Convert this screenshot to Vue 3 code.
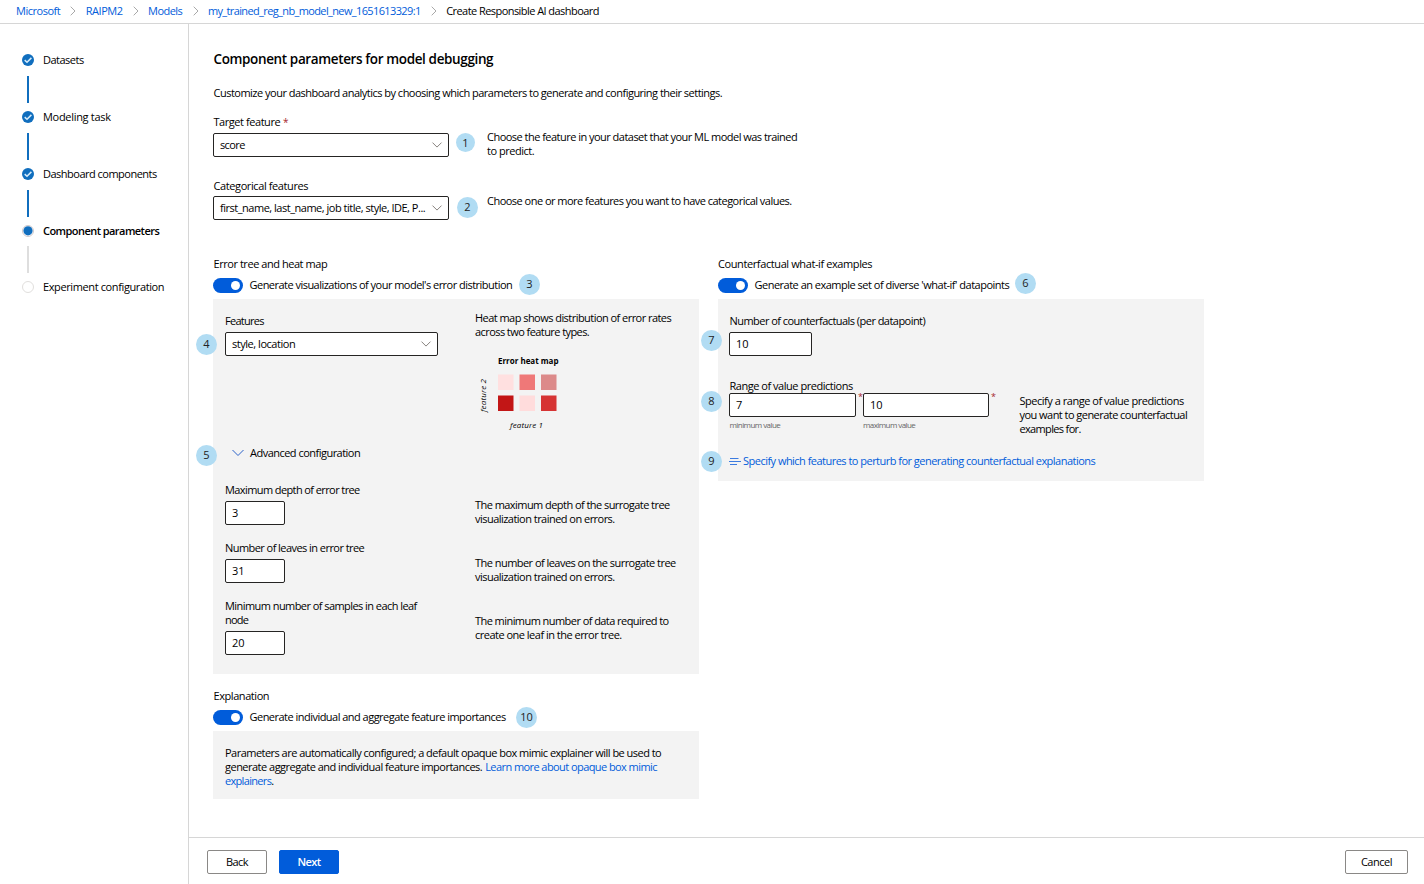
<script setup>
const crumbs = [
  { text: 'Microsoft', w: 45 },
  { text: 'RAIPM2', w: 37.5 },
  { text: 'Models', w: 35 },
  { text: 'my_trained_reg_nb_model_new_1651613329:1', w: 213.5 },
]

const steps = [
  { text: 'Datasets', w: 41.5, state: 'done' },
  { text: 'Modeling task', w: 68.5, state: 'done' },
  { text: 'Dashboard components', w: 114.5, state: 'done' },
  { text: 'Component parameters', w: 117, state: 'current' },
  { text: 'Experiment configuration', w: 122, state: 'todo' },
]

const treeSettings = [
  {
    label: [['Maximum depth of error tree', 135.5]],
    value: '3',
    help: [['The maximum depth of the surrogate tree', 195.5], ['visualization trained on errors.', 140.5]],
  },
  {
    label: [['Number of leaves in error tree', 140]],
    value: '31',
    help: [['The number of leaves on the surrogate tree', 201.5], ['visualization trained on errors.', 140.5]],
  },
  {
    label: [['Minimum number of samples in each leaf', 192.5], ['node', 24]],
    value: '20',
    help: [['The minimum number of data required to', 194.5], ['create one leaf in the error tree.', 147.5]],
  },
]

// Tracks a line of text so that it fills the given width in pixels.
const vFit = {
  mounted(el, { value }) {
    const natural = el.getBoundingClientRect().width
    const count = el.textContent.length
    if (count) el.style.letterSpacing = `${(value - 0.8 - natural) / count}px`
  },
}
</script>

<template>
  <div class="page">
    <nav class="crumbs">
      <template v-for="c in crumbs" :key="c.text">
        <a v-fit="c.w" class="line link">{{ c.text }}</a>
        <svg class="sep" width="6" height="10" viewBox="0 0 6 10"><path d="M.7.7 5 5 .7 9.3" /></svg>
      </template>
      <span v-fit="153.5" class="line">Create Responsible AI dashboard</span>
    </nav>

    <div class="body">
      <aside class="steps">
        <div v-for="s in steps" :key="s.text" class="step" :class="s.state">
          <div class="step-row">
            <svg class="dot" width="12" height="12" viewBox="0 0 12 12">
              <template v-if="s.state === 'done'">
                <circle cx="6" cy="6" r="6" fill="#106ebe" />
                <path d="M2.700 6.100 5 8.300 9.400 3.900" fill="none" stroke="#d5ebfa" stroke-width="1.500" />
              </template>
              <template v-else-if="s.state === 'current'">
                <circle cx="6" cy="6" r="5.5" fill="#fff" stroke="#cfc9cc" />
                <circle cx="6" cy="5.8" r="4.6" fill="#106ebe" />
              </template>
              <circle v-else cx="6" cy="6" r="5.5" fill="#fff" stroke="#e1dfdd" />
            </svg>
            <span v-fit="s.w" class="line">{{ s.text }}</span>
          </div>
          <div class="connector"></div>
        </div>
      </aside>

      <div class="right">
        <main class="main">
          <h1><span v-fit="280.5" class="line">Component parameters for model debugging</span></h1>
          <p class="intro"><span v-fit="509.5" class="line">Customize your dashboard analytics by choosing which parameters to generate and configuring their settings.</span></p>

          <div class="field-row first">
            <div class="field">
              <div class="label inset"><span v-fit="67.5" class="line">Target feature</span> <i class="req">*</i></div>
              <div class="box wide">
                <span v-fit="25.5" class="line">score</span>
                <svg class="caret" width="10" height="6" viewBox="0 0 10 6"><path d="M.5.6 5 5.1 9.5.6" /></svg>
              </div>
            </div>
            <b class="badge small b1">1</b>
            <div class="help">
              <span v-fit="311" class="line">Choose the feature in your dataset that your ML model was trained</span>
              <span v-fit="48" class="line">to predict.</span>
            </div>
          </div>

          <div class="field-row second">
            <div class="field">
              <div class="label inset"><span v-fit="95.5" class="line">Categorical features</span></div>
              <div class="box wide">
                <span v-fit="206" class="line">first_name, last_name, job title, style, IDE, P...</span>
                <svg class="caret" width="10" height="6" viewBox="0 0 10 6"><path d="M.5.6 5 5.1 9.5.6" /></svg>
              </div>
            </div>
            <b class="badge b2">2</b>
            <div class="help">
              <span v-fit="305.5" class="line">Choose one or more features you want to have categorical values.</span>
            </div>
          </div>

          <div class="columns">
            <div class="column">
              <div class="heading inset"><span v-fit="114.5" class="line">Error tree and heat map</span></div>
              <div class="switch-row">
                <span class="toggle"></span>
                <span v-fit="263.5" class="line">Generate visualizations of your model's error distribution</span>
                <b class="badge b3">3</b>
              </div>
              <section class="panel tree">
                <b class="badge edge b4">4</b>
                <b class="badge edge b5">5</b>
                <div class="split">
                  <div class="left">
                    <div class="label"><span v-fit="39.5" class="line">Features</span></div>
                    <div class="box features">
                      <span v-fit="64" class="line">style, location</span>
                      <svg class="caret" width="10" height="6" viewBox="0 0 10 6"><path d="M.5.6 5 5.1 9.5.6" /></svg>
                    </div>
                  </div>
                  <div class="about">
                    <span v-fit="197" class="line">Heat map shows distribution of error rates</span>
                    <span v-fit="115" class="line">across two feature types.</span>
                    <svg class="heat" width="100" height="84" viewBox="0 0 100 84">
                      <text x="23" y="13.5" class="heat-title" textLength="60.5">Error heat map</text>
                      <rect x="23" y="24.500" width="15.500" height="15.500" fill="#ffe0e0" />
                      <rect x="44.500" y="24.500" width="15.500" height="15.500" fill="#ef7878" />
                      <rect x="66" y="24.500" width="15.500" height="15.500" fill="#dc8a8a" />
                      <rect x="23" y="45.500" width="15.500" height="15.500" fill="#c21616" />
                      <rect x="44.500" y="45.500" width="15.500" height="15.500" fill="#ffdcdc" />
                      <rect x="66" y="45.500" width="15.500" height="15.500" fill="#d63333" />
                      <text x="35" y="78" class="heat-axis" textLength="33">feature 1</text>
                      <text transform="translate(11 62) rotate(-90)" class="heat-axis" textLength="33">feature 2</text>
                    </svg>
                  </div>
                </div>
                <div class="advanced">
                  <svg width="12" height="8" viewBox="0 0 12 8"><path d="M.5 1 6 6.500 11.500 1" /></svg>
                  <span v-fit="111" class="line">Advanced configuration</span>
                </div>
                <div v-for="s in treeSettings" :key="s.value" class="split setting">
                  <div class="left">
                    <div class="label">
                      <span v-for="[t, w] in s.label" :key="t" v-fit="w" class="line">{{ t }}</span>
                    </div>
                    <div class="box number">{{ s.value }}</div>
                  </div>
                  <div class="about">
                    <span v-for="[t, w] in s.help" :key="t" v-fit="w" class="line">{{ t }}</span>
                  </div>
                </div>
              </section>

              <div class="heading explanation inset"><span v-fit="56.5" class="line">Explanation</span></div>
              <div class="switch-row">
                <span class="toggle"></span>
                <span v-fit="257" class="line">Generate individual and aggregate feature importances</span>
                <b class="badge b10">10</b>
              </div>
              <section class="panel explain">
                <div><span v-fit="437" class="line">Parameters are automatically configured; a default opaque box mimic explainer will be used to</span></div>
                <div class="mixed">
                  <span v-fit="258" class="line">generate aggregate and individual feature importances.</span>
                  <a v-fit="172.500" class="line link">Learn more about opaque box mimic</a>
                </div>
                <div><a v-fit="47" class="line link">explainers</a>.</div>
              </section>
            </div>

            <div class="column">
              <div class="heading"><span v-fit="155" class="line">Counterfactual what-if examples</span></div>
              <div class="switch-row">
                <span class="toggle"></span>
                <span v-fit="255.500" class="line">Generate an example set of diverse 'what-if' datapoints</span>
                <b class="badge b6">6</b>
              </div>
              <section class="panel what-if">
                <b class="badge edge b7">7</b>
                <b class="badge edge b8">8</b>
                <b class="badge edge b9">9</b>
                <div class="label inset"><span v-fit="196.500" class="line">Number of counterfactuals (per datapoint)</span></div>
                <div class="box count">10</div>
                <div class="range">
                  <div class="range-fields">
                    <div class="inset"><span v-fit="124" class="line">Range of value predictions</span></div>
                    <div class="pair">
                      <div>
                        <div class="box min">7<i class="mark">*</i></div>
                        <div class="hint inset"><span v-fit="51.500" class="line">minimum value</span></div>
                      </div>
                      <div>
                        <div class="box max">10<i class="mark">*</i></div>
                        <div class="hint"><span v-fit="53" class="line">maximum value</span></div>
                      </div>
                    </div>
                  </div>
                  <div class="range-help">
                    <span v-fit="165" class="line">Specify a range of value predictions</span>
                    <span v-fit="168.500" class="line">you want to generate counterfactual</span>
                    <span v-fit="62" class="line">examples for.</span>
                  </div>
                </div>
                <div class="perturb">
                  <svg width="12" height="7" viewBox="0 0 12 7">
                    <path d="M1 .5H9.500M0 3.500H12M1 6.500H8" />
                  </svg>
                  <a v-fit="353" class="line link">Specify which features to perturb for generating counterfactual explanations</a>
                </div>
              </section>
            </div>
          </div>
        </main>

        <footer class="footer">
          <button class="btn"><span v-fit="23" class="line">Back</span></button>
          <button class="btn primary"><span v-fit="24" class="line">Next</span></button>
          <button class="btn cancel"><span v-fit="32" class="line">Cancel</span></button>
        </footer>
      </div>
    </div>
  </div>
</template>

<style>
body {
  margin: 0;
  background: #fff;
}
</style>

<style scoped>
.page {
  display: flex;
  flex-direction: column;
  width: 1424px;
  height: 884px;
  overflow: hidden;
  box-sizing: border-box;
  background: #fff;
  color: #000;
  font: 11px/14px "Open Sans", "Noto Sans", sans-serif;
}
.page * { box-sizing: border-box; }
.line { display: inline-block; white-space: nowrap; }
.link { color: #015cda; }
.inset { padding-left: .5px; }
svg { display: block; flex: none; overflow: visible; }

.crumbs {
  display: flex;
  align-items: center;
  height: 24px;
  padding: 0 16px 1px;
  border-bottom: 1px solid #d6d6d6;
}
.sep { margin: -1px 9.300px 0 10.300px; }
.sep path { fill: none; stroke: #a9a9a9; }

.body { display: flex; flex: 1; min-height: 0; }

.steps {
  width: 189px;
  padding: 29px 0 0 22px;
  border-right: 1px solid #d6d6d6;
}
.step-row { display: flex; align-items: center; height: 14px; gap: 9px; }
.connector { width: 2px; height: 27px; margin: 9px 0 7px 5px; background: #106ebe; }
.current { font-weight: 600; }
.current .connector { margin-top: 8px; background: #dedede; }
.todo .connector { display: none; }

.right { display: flex; flex: 1; flex-direction: column; min-width: 0; }
.main { flex: 1; padding: 25px 0 0 24px; }
h1 { margin: 0; padding-left: .5px; font-size: 13.5px; line-height: 20px; font-weight: 600; }
h1 .line { display: block; width: max-content; }
.intro { height: 14px; margin: 17px 0 0; padding-left: .5px; }

.field-row { display: flex; height: 42px; }
.first { margin-top: 15px; }
.second { height: 41px; margin-top: 22px; }
.field { width: 236px; }
.label { display: flow-root; }
.label .line { vertical-align: top; }
.req { font-style: normal; font-size: 10px; line-height: 1; color: #a4262c; }
.box {
  position: relative;
  display: flex;
  align-items: center;
  height: 24px;
  padding: 0 6px;
  border: 1px solid #252423;
  border-radius: 2px;
  background: #fff;
}
.first .box { margin-top: 4px; }
.second .box { margin-top: 3px; }
.caret { position: absolute; right: 6px; top: 8px; }
.caret path { fill: none; stroke: #7a7570; stroke-width: .9; }

.badge {
  display: block;
  flex: none;
  width: 21px;
  height: 21px;
  border-radius: 50%;
  background: #b1dcf3;
  color: #222;
  font-weight: 400;
  line-height: 20px;
  text-align: center;
}
.small { width: 19px; height: 19px; line-height: 19px; }
.b1 { margin: 18px 12px 0 7px; }
.b2 { margin: 18px 9px 0 8px; }
.help { display: flex; flex-direction: column; align-items: flex-start; padding-top: 15px; }

.columns { display: flex; gap: 19px; margin-top: 37px; }
.column { width: 486px; }
.heading { height: 14px; }
.explanation { margin-top: 15px; }
.switch-row { display: flex; align-items: center; height: 15px; margin-top: 7px; }
.switch-row .line { margin-top: -1px; }
.toggle {
  width: 30px;
  height: 15px;
  margin-right: 6.5px;
  padding: 3px;
  border-radius: 8px;
  background: #015cda;
}
.toggle::after {
  content: "";
  display: block;
  width: 9px;
  height: 9px;
  margin-left: 15px;
  border-radius: 50%;
  background: #fff;
}
.b3 { margin: -2px 0 0 6.800px; }
.b6 { margin: -4px 0 0 5.800px; }
.b10 { margin-left: 10.300px; }

.panel { position: relative; margin-top: 6px; background: #f3f3f3; }
.edge { position: absolute; left: -17px; }
.b4 { top: 35px; }
.b5 { top: 146px; }
.b7 { top: 31px; }
.b8 { top: 92px; }
.b9 { top: 152px; }

.tree { height: 375px; padding: 15px 12px 0; }
.split { display: flex; align-items: flex-start; }
.left { width: 213px; }
.left .line, .about .line, .range-help .line { display: block; width: max-content; }
.left .box { margin-top: 4px; }
.left .box.number { width: 60px; }
.about { padding-left: 37px; margin-top: -3px; }
.heat { margin-top: 11px; }
.heat-title { font-size: 8px; font-weight: 700; }
.heat-axis { font-size: 8px; font-style: italic; }
.advanced { display: flex; align-items: center; gap: 6px; height: 14px; margin: 12px 0 23px 7px; }
.advanced path { fill: none; stroke: #2b62c9; }
.setting { margin-bottom: 15px; }
.setting .about { margin-top: 15px; }

.explain { height: 68px; padding: 15px 12px 0; margin-top: 6px; }
.explain > div { height: 14px; }
.mixed { display: flex; gap: 3px; }

.what-if { height: 182px; padding: 15px 0 0 11px; }
.box.count { width: 83px; margin-top: 4px; }
.range { display: flex; margin-top: 23px; }
.range-fields { width: 290.5px; }
.pair { display: flex; gap: 7px; }
.min { width: 127px; }
.max { width: 126px; }
.mark { position: absolute; right: -8px; top: -4px; font-size: 9px; font-style: normal; color: #a4262c; }
.hint { height: 10px; margin-top: 3px; font-size: 8px; line-height: 10px; color: #666; }
.range-help { margin-top: 15px; }
.perturb { display: flex; align-items: center; gap: 2px; height: 14px; margin-top: 18px; }
.perturb path { stroke: #3c7be0; }

.footer {
  display: flex;
  gap: 12px;
  height: 47px;
  padding: 12px 16px 0 18px;
  border-top: 1px solid #d6d6d6;
}
.btn {
  width: 60px;
  height: 24px;
  padding: 0;
  border: 1px solid #8a8886;
  border-radius: 2px;
  background: #fff;
  color: #000;
  font: inherit;
}
.primary { border-color: #015cda; background: #015cda; color: #fff; font-weight: 600; }
.cancel { width: 63px; margin-left: auto; }
</style>
